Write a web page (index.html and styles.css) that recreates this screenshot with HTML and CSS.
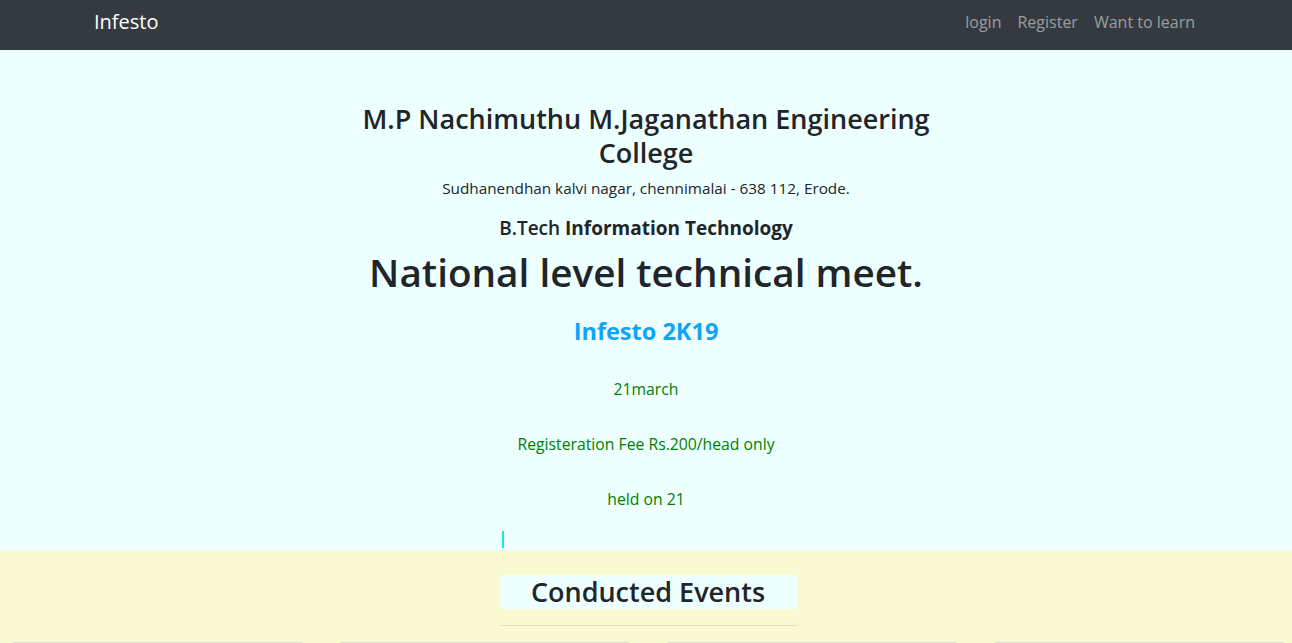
FILE: index.html
```html
<!DOCTYPE html>
<html lang="en">
<head>
<meta charset="utf-8">
<title>Infesto</title>
<link rel="stylesheet" href="styles.css">
</head>
<body>
<nav class="navbar">
  <div class="nav-inner">
    <a class="brand" href="#">Infesto</a>
    <ul class="nav-links">
      <li><a href="#">login</a></li>
      <li><a href="#">Register</a></li>
      <li><a href="#">Want to learn</a></li>
    </ul>
  </div>
</nav>
<section class="hero">
  <div class="hero-inner">
    <h3 class="college">M.P Nachimuthu M.Jaganathan Engineering College</h3>
    <p class="address">Sudhanendhan kalvi nagar, chennimalai - 638 112, Erode.</p>
    <h5 class="dept">B.Tech <b>Information Technology</b></h5>
    <h1 class="meet">National level technical meet.</h1>
    <h4 class="event">Infesto 2K19</h4>
    <p class="info">21march</p>
    <p class="info">Registeration Fee Rs.200/head only</p>
    <p class="info">held on 21</p>
    <div class="typer"><span class="cursor"></span></div>
  </div>
</section>
<section class="events">
  <div class="events-head">
    <h3 class="events-title">Conducted Events</h3>
    <hr class="rule">
  </div>
  <div class="cards">
    <div class="card"></div>
    <div class="card"></div>
    <div class="card"></div>
    <div class="card"></div>
  </div>
</section>
</body>
</html>
```
FILE: styles.css
```css
* { box-sizing: border-box; }
html, body { margin: 0; padding: 0; }
body {
  font-family: "Open Sans", "DejaVu Sans", sans-serif;
  color: #212529;
  font-size: 16px;
  line-height: 1.5;
  background: #fafad2;
}
a { text-decoration: none; }

.navbar { background: #343a40; height: 50px; }
.nav-inner {
  width: 1140px;
  margin: 0 auto;
  padding: 10px 15px 0 15px;
  display: flex;
  justify-content: space-between;
  align-items: flex-start;
}
.brand { color: #fff; font-size: 20px; line-height: 24px; padding-left: 3px; }
.nav-links { list-style: none; margin: 0 -2px 0 0; padding: 0; display: flex; }
.nav-links a {
  display: block;
  color: rgba(255,255,255,.5);
  padding: 0 8px;
  line-height: 24px;
  font-size: 16px;
}

.hero { background: #eeffff; padding: 52px 0 0; }
.hero-inner { width: 600px; margin: 0 auto; text-align: center; }
h1, h3, h4, h5 { font-weight: 600; margin: 0; }
.college { font-size: 27px; line-height: 34px; margin-bottom: 6px; }
.address { margin: 0 0 16px; font-size: 15.3px; line-height: 24px; }
.dept { font-size: 19px; line-height: 24px; margin-bottom: 8px; }
.dept b { font-weight: 700; }
.meet { font-size: 38.7px; line-height: 48px; margin-bottom: 21px; }
.event { font-size: 23.5px; line-height: 29px; color: #0fa4f7; font-weight: 700; margin-bottom: 31px; }
.info { color: #008000; margin: 0 0 31px; font-size: 15.75px; line-height: 24px; }
.typer { width: 297px; margin: -11px auto 0; padding-left: 2px; text-align: left; height: 20px; position: relative; left: 2px; }
.cursor { display: inline-block; width: 2px; height: 17px; background: #17e8e8; vertical-align: top; }

.events { padding-top: 24px; }
.events-head { width: 297px; margin: 0 auto; position: relative; left: 2px; }
.events-title {
  background: #eeffff;
  border-radius: 4px;
  font-size: 27px;
  line-height: 34px;
  text-align: center;
}
.rule { border: 0; border-top: 1px solid rgba(0,0,0,.1); margin: 16px 0 16px; }
.cards {
  display: grid;
  grid-template-columns: repeat(4, 294px);
  column-gap: 33px;
  padding-left: 11px;
}
.card { height: 300px; border: 1px solid #dcdcd4; border-radius: 4px; background: #fff; }
```
